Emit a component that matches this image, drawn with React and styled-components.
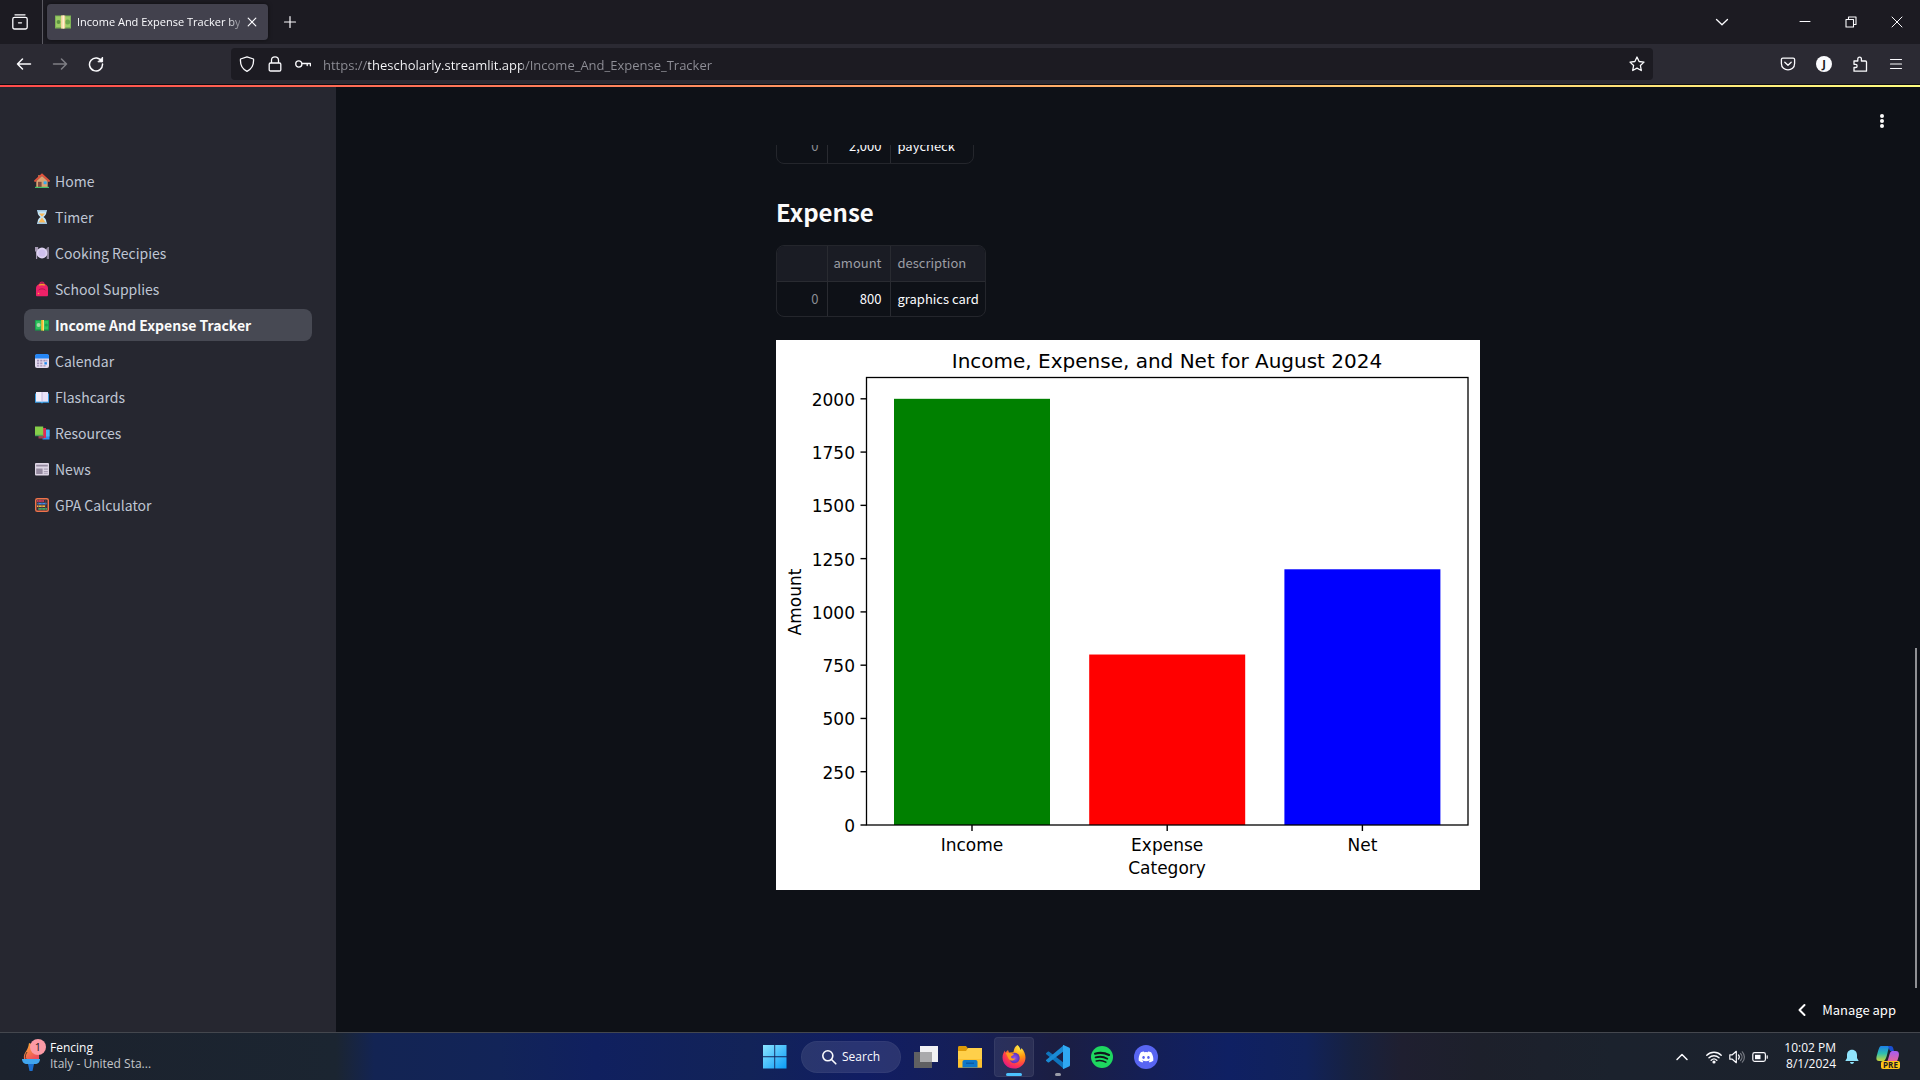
import React from "react";
import styled, { createGlobalStyle, css } from "styled-components";
import { FaDiscord } from "react-icons/fa";

const GlobalStyle = createGlobalStyle`
  *, *::before, *::after { box-sizing: border-box; }
  body { margin: 0; background: #0e1117; }
  button { border: 0; padding: 0; background: none; color: inherit; font: inherit; }
  svg { display: block; flex: none; }
`;

const system = `"Open Sans", "Noto Sans", sans-serif`;
const source = `"Noto Sans CJK SC", "Noto Sans", sans-serif`;

/* ---------- Window ---------- */

const Window = styled.div`
  display: flex;
  flex-direction: column;
  height: 100vh;
  overflow: hidden;
  color: #fbfbfe;
  font-family: ${system};
  font-size: 12px;
`;

const TabStrip = styled.header`
  display: flex;
  align-items: center;
  height: 44px;
  flex: none;
  background: #1c1b22;
`;

const IconButton = styled.button`
  display: flex;
  align-items: center;
  justify-content: center;
  width: ${(p) => p.$width || 36}px;
  height: 100%;
  flex: none;
  opacity: ${(p) => (p.disabled ? 0.4 : 1)};
  color: #fbfbfe;
`;

const ViewCell = styled.div`
  width: 43px;
  height: 100%;
  padding-right: 2px;
  border-right: 1px solid #5b5a62;
`;

const Tab = styled.div`
  display: flex;
  align-items: center;
  width: 221px;
  height: 36px;
  margin: 0 2px 0 4px;
  padding: 0 4px 0 8px;
  border-radius: 4px;
  background: #42414d;
  box-shadow: 0 0 4px rgba(0, 0, 0, 0.5);
`;

const TabTitle = styled.button`
  flex: 1;
  min-width: 0;
  margin-left: 6px;
  overflow: hidden;
  white-space: nowrap;
  text-align: left;
  font-size: 11px;
  line-height: 20px;
  mask-image: linear-gradient(90deg, #000 150px, transparent 170px);
`;

const WindowControls = styled.div`
  display: flex;
  height: 100%;
  padding-left: 40px;
`;

const Spacer = styled.div`
  flex: 1;
`;

const Toolbar = styled.div`
  display: flex;
  align-items: center;
  height: 41px;
  flex: none;
  border-bottom: 1px solid #0c0c10;
  background: #2b2a33;
`;

const NavButtons = styled.div`
  display: flex;
  width: 231px;
  height: 40px;
  padding-left: 6px;
  flex: none;
`;

const AddressBar = styled.label`
  display: flex;
  flex: 1;
  align-items: center;
  gap: 12px;
  height: 32px;
  padding: 0 8px;
  border-radius: 4px;
  background: #1c1b22;
`;

const AddressInput = styled.input`
  flex: 1;
  min-width: 0;
  padding: 2px 0 0;
  border: 0;
  outline: 0;
  background: linear-gradient(90deg, #8f8f97 45px, #fbfbfe 45px 199px, #8f8f97 199px);
  background-clip: text;
  -webkit-background-clip: text;
  color: transparent;
  font-family: ${system};
  font-size: 13px;
  line-height: 20px;
`;

const ToolbarEnd = styled.div`
  display: flex;
  justify-content: flex-end;
  width: 267px;
  height: 40px;
  padding-right: 6px;
  flex: none;
`;

const Avatar = styled.span`
  display: grid;
  place-items: center;
  width: 16px;
  height: 16px;
  border-radius: 50%;
  background: #fbfbfe;
  color: #1c1b22;
  font-size: 11px;
  font-weight: 700;
  line-height: 16px;
`;

/* ---------- App ---------- */

const Page = styled.div`
  display: grid;
  grid-template-columns: 336px minmax(0, 1fr);
  grid-template-rows: 2px minmax(0, 1fr);
  flex: 1;
  min-height: 0;
  background: #0e1117;
  font-family: ${source};
`;

const Decoration = styled.div`
  grid-column: 1 / -1;
  background: linear-gradient(90deg, #ff4b4b, #fffd80);
`;

const Sidebar = styled.nav`
  padding: 78px 24px 0;
  background: #262730;
`;

const NavList = styled.ul`
  display: flex;
  flex-direction: column;
  gap: 4px;
  margin: 0;
  padding: 0;
  list-style: none;
`;

const NavLink = styled.a`
  display: flex;
  align-items: center;
  gap: 5px;
  height: 32px;
  padding: 0 8px 0 10px;
  border-radius: 8px;
  color: #bfc5d3;
  font-size: 14px;
  line-height: 32px;
  text-decoration: none;
  white-space: nowrap;
  ${(p) =>
    p.$active &&
    css`
      background: #474953;
      color: #fafafa;
      font-weight: 700;
    `}
`;

const Main = styled.main`
  display: flex;
  flex-direction: column;
  min-width: 0;
  min-height: 0;
`;

const AppHeader = styled.div`
  display: flex;
  justify-content: flex-end;
  align-items: center;
  height: 58px;
  padding: 10px 20px 0 0;
  flex: none;
`;

const Scroller = styled.div`
  position: relative;
  flex: 1;
  min-height: 0;
  overflow: hidden;
`;

const Block = styled.div`
  display: flex;
  flex-direction: column;
  align-items: flex-start;
  width: 100%;
  max-width: 704px;
  margin: -53px auto 0;
`;

const Heading = styled.h3`
  margin: 0;
  padding: 28px 0 13px;
  color: #fafafa;
  font-size: 24px;
  font-weight: 700;
  line-height: 40px;
`;

const TableFrame = styled.div`
  overflow: hidden;
  border: 1px solid #24262c;
  border-radius: 8px;
`;

const DataTable = styled.table`
  border-collapse: collapse;
  font-size: 13px;
  line-height: 20px;

  th,
  td {
    height: 35px;
    padding: 0 8px 0 6px;
    border: 0 solid #292b31;
    border-left-width: 1px;
    font-weight: 400;
    text-align: left;
    white-space: nowrap;
  }
  th:first-child,
  td:first-child {
    width: 50px;
    border-left-width: 0;
    color: #8a8d94;
    text-align: right;
  }
  th:nth-child(2),
  td:nth-child(2) {
    width: 63px;
    text-align: right;
  }
  th:nth-child(3),
  td:nth-child(3) {
    width: ${(p) => p.$last}px;
    padding: 0 4px 0 7px;
  }
  thead th {
    background: #1a1c24;
    border-bottom-width: 1px;
    color: #9c9ea5;
  }
`;

const ChartSvg = styled.svg`
  width: 100%;
  height: auto;
  margin-top: 23px;
  background: #fff;
  font-family: "DejaVu Sans", sans-serif;
  font-size: 17px;
`;

const ScrollThumb = styled.div`
  position: absolute;
  right: 3px;
  bottom: 0;
  width: 2px;
  height: 340px;
  background: #8f9094;
`;

const ManageBar = styled.div`
  display: flex;
  justify-content: flex-end;
  height: 44px;
  padding-right: 24px;
  flex: none;
`;

const ManageButton = styled.button`
  display: flex;
  align-items: center;
  gap: 12px;
  color: #fff;
  font-size: 13px;
  line-height: 20px;
`;

/* ---------- Taskbar ---------- */

const Taskbar = styled.footer`
  display: grid;
  grid-template-columns: 1fr auto 1fr;
  height: 48px;
  flex: none;
  border-top: 1px solid #44474e;
  background: linear-gradient(
    90deg,
    #1c222d 0%,
    #1b2531 17.5%,
    #132453 19.5%,
    #122458 26%,
    #10205f 31%,
    #122358 39%,
    #111d63 45%,
    #151f58 50%,
    #1b1e42 55%,
    #141f57 60%,
    #0f2063 64%,
    #11225a 68%,
    #17213f 70.5%,
    #1f1f30 73%,
    #1d202b 77%,
    #1b222d 84%,
    #1c222c 100%
  );
`;

const Widget = styled.button`
  display: flex;
  align-items: center;
  justify-self: start;
  gap: 4px;
  padding: 0 0 2px 20px;
  text-align: left;
  font-size: 12px;
  line-height: 16px;
`;

const WidgetDetail = styled.span`
  display: block;
  color: #c3c6ca;
`;

const Dock = styled.div`
  display: flex;
  align-items: center;
`;

const DockItem = styled.button`
  display: flex;
  flex-direction: column;
  align-items: center;
  justify-content: center;
  position: relative;
  width: 40px;
  height: 40px;
  margin: 0 2px;
  border-radius: 4px;
  ${(p) =>
    p.$active &&
    css`
      background: rgba(255, 255, 255, 0.08);
      box-shadow: inset 0 0 0 1px rgba(255, 255, 255, 0.06);
    `}

  &::after {
    content: "";
    position: absolute;
    bottom: 1px;
    width: ${(p) => (p.$active ? 16 : 6)}px;
    height: 3px;
    border-radius: 2px;
    background: ${(p) => (p.$active ? "#4cc2ff" : "#9a9ca8")};
    display: ${(p) => (p.$active || p.$open ? "block" : "none")};
  }
`;

const SearchPill = styled.button`
  display: flex;
  align-items: center;
  justify-content: center;
  gap: 5px;
  width: 100px;
  height: 32px;
  margin: 0 3px 0 4px;
  border-radius: 16px;
  background: rgba(255, 255, 255, 0.1);
  box-shadow: inset 0 0 0 1px rgba(255, 255, 255, 0.04);
`;

const Tray = styled.div`
  display: flex;
  align-items: center;
  justify-content: flex-end;
  gap: 8px;
  padding-right: 12px;
`;

const TrayGroup = styled.button`
  display: flex;
  align-items: center;
  gap: 7px;
  margin: 0 8px 0 8px;
`;

const Clock = styled.time`
  padding-bottom: 2px;
  font-size: 12px;
  line-height: 16px;
  text-align: right;
`;

/* ---------- Drawings ---------- */

const Line = ({ size = 16, w = 1.3, children }) => (
  <svg width={size} height={size} viewBox="0 0 16 16" fill="none" stroke="currentColor" strokeWidth={w} strokeLinecap="round" strokeLinejoin="round" aria-hidden="true">
    {children}
  </svg>
);

const Emoji = ({ children, width = 16 }) => (
  <svg width={width} height="16" viewBox="0 0 16 16" aria-hidden="true">
    {children}
  </svg>
);

const House = () => (
  <Emoji>
    <path d="M4 2h2v3H4z" fill="#a56a4a" />
    <path d="M2.3 8 8 2.8 13.7 8v6H2.3z" fill="#d9a273" />
    <path d="M1 8 8 1.5 15 8" fill="none" stroke="#e0533c" strokeWidth="1.8" strokeLinecap="round" />
    <path d="M4 8.8h3.6V14H4z" fill="#7d4b3f" />
    <path d="M9.6 8.4h3v2.8h-3z" fill="#35a9f0" />
    <path d="M1 13.8h14V15H1z" fill="#43c06a" />
  </Emoji>
);
const Hourglass = () => (
  <Emoji>
    <path d="M3.5 2h9c0 3.400-1.200 4.700-3 6 1.800 1.300 3 2.800 3 6h-9c0-3.200 1.200-4.700 3-6-1.800-1.300-3-2.600-3-6z" fill="#c4e6f8" />
    <path d="M5 4.500h6L8 7.800zM8 8.500l3.800 5.300H4.200z" fill="#f9b757" />
    <path d="M3 1h10v1.600H3zM3 13.400h10V15H3z" fill="#9fc3dd" />
  </Emoji>
);
const Plate = () => (
  <Emoji>
    <path d="M1 2v4l1 1v7h1.200V7l1-1V2M13.800 14V2c-1.600 1-2 4-1.600 6h.6v6zM14.200 2H15v12h-.8z" fill="#a79bb5" />
    <circle cx="8" cy="8" r="5.400" fill="#ded3f2" />
    <circle cx="8" cy="8" r="3.600" fill="#cfc0ee" />
  </Emoji>
);
const Backpack = () => (
  <Emoji>
    <path d="M6 3c0-2.600 4-2.600 4 0" fill="none" stroke="#c9185b" strokeWidth="1.200" />
    <path d="M2 14V7.500C2 .8 14 .8 14 7.500V14c0 1-.5 1.300-1.300 1.300H3.300C2.500 15.300 2 15 2 14z" fill="#ee2168" />
    <path d="M5.500 4.600c0-1.600 5-1.600 5 0" fill="none" stroke="#f5a12c" strokeWidth="1.500" />
    <path d="M4.400 9.400c1-2 6.200-2 7.200 0" fill="none" stroke="#b4134f" strokeWidth="1" />
    <circle cx="4.500" cy="12.500" r=".8" fill="#f9a63a" />
  </Emoji>
);
const Money = () => (
  <Emoji>
    <path d="M1 3h14v10.600H1z" fill="#169a4a" />
    <path d="M1.800 3.800h12.400v8.600H1.800z" fill="#2fc15e" />
    <circle cx="4.600" cy="8" r="2" fill="#a9d9a8" />
    <circle cx="12.300" cy="8" r="1.600" fill="#1da050" />
    <path d="M7.200 3h2.800v10.600H7.200z" fill="#f8b832" />
    <path d="M9 3h1v10.600H9z" fill="#fbe07a" />
  </Emoji>
);
const Calendar = () => (
  <Emoji>
    <rect x="1" y="1.500" width="14" height="13.500" rx="2" fill="#e3dbee" />
    <path d="M1 5.400V3c0-1.200.8-2 2-2h10c1.200 0 2 .8 2 2v2.400z" fill="#2586f5" />
    <path d="M3 6.800h2.200V8.500H3zM6.200 6.800h2.200V8.500H6.200zM9.400 6.800h2.200V8.500H9.400zM3 9.500h2.200v1.700H3zM6.200 9.500h2.200v1.700H6.200zM3 12.200h2.200v1.300H3zM6.200 12.200h2.200v1.300H6.200zM9.400 12.200h2.200v1.300H9.400zM12.300 6.800h1v1.700h-1z" fill="#a292b8" />
    <path d="M10.400 9.200h2.500v2.300h-2.500z" fill="#1c86ee" />
  </Emoji>
);
const OpenBook = () => (
  <Emoji>
    <path d="M1 4.400h14v9.400H9.200L8 14.600l-1.200-.8H1z" fill="#3aa0e8" />
    <path d="M2 3h6v9.600H2z" fill="#f3eefa" />
    <path d="M8 3h6v9.600H8z" fill="#e9e1f6" />
    <path d="M7.500 3h1v9.600h-1z" fill="#c6b9db" />
  </Emoji>
);
const Books = () => (
  <Emoji>
    <path d="M8.500 5h7v9.500h-7z" fill="#2f8df0" />
    <path d="M12 4.500h3.500v7H12z" fill="#4bb6f5" />
    <path d="M5.500 3H12v10H5.500z" fill="#dc2b58" />
    <path d="M4.500 11H10v2.500H4.500z" fill="#a04054" />
    <path d="M1 1.500h8.200v9.300H1z" fill="#86cf49" />
    <path d="M1 9.800h8.200v1.400H1z" fill="#4f9e5b" />
  </Emoji>
);
const Newspaper = () => (
  <Emoji>
    <rect x="1" y="2" width="14" height="12.500" rx="1" fill="#ddd5e4" />
    <path d="M2.200 3.800h11.600v1.800H2.200zM2.200 7.400h6.400v5.600H2.200z" fill="#94899f" />
    <path d="M9.800 7.600h4v1.200h-4zM9.800 10h4v1.200h-4zM9.800 12.200h4v.8h-4z" fill="#aaa0b5" />
  </Emoji>
);
const Abacus = () => (
  <Emoji>
    <rect x="1.700" y="1.700" width="12.600" height="12.600" rx="1.600" fill="#3b2f38" stroke="#f0734a" strokeWidth="1.400" />
    <path d="M3 4h7" stroke="#e8385c" strokeWidth="1.600" />
    <path d="M3.500 6.600h9" stroke="#3b8df2" strokeWidth="1.600" />
    <path d="M3 9.200h8" stroke="#f4b23c" strokeWidth="1.600" />
    <path d="M4 11.900h9" stroke="#3fb865" strokeWidth="1.600" />
    <path d="M4.500 2.400v11.200M8 2.400v11.200M11.500 2.400v11.200" stroke="#5c4a52" strokeWidth=".6" />
  </Emoji>
);
const TabMoney = () => (
  <Emoji>
    <path d="M0 1.500h16v13H0z" fill="#7db357" />
    <path d="M1 2.500h14v10.500H1z" fill="#9ccc65" />
    <circle cx="3.500" cy="8" r="1.900" fill="#5d9440" />
    <circle cx="12.600" cy="8" r="2.500" fill="#6da64b" />
    <path d="M6 1.500h4.200v13H6z" fill="#f3d59b" />
    <path d="M7.500 1.500H9v13H7.500z" fill="#fff1cf" />
  </Emoji>
);

const Torch = () => (
  <svg width="26" height="34" viewBox="0 0 26 34" aria-hidden="true">
    <defs>
      <linearGradient id="flame" x1="0" y1="0" x2=".6" y2="1">
        <stop offset="0" stopColor="#ffb62e" />
        <stop offset="1" stopColor="#ee4f5c" />
      </linearGradient>
    </defs>
    <path d="M4 20C3 13 8 13 9 4c8 3 11 8 10 16z" fill="url(#flame)" />
    <path d="M7 13c-2 3-2 5-1 7" stroke="#5b3a24" fill="none" />
    <path d="M2 20h18c0 3-2 5-5 5H7c-3 0-5-2-5-5z" fill="#41a5ee" />
    <path d="M8 25h6l-1.500 7h-3z" fill="#1b6fd0" />
    <circle cx="18" cy="8" r="8" fill="#fc9aa5" />
    <text x="18" y="12" fontSize="11" textAnchor="middle" fill="#1c1b22">1</text>
  </svg>
);

const WindowsLogo = () => (
  <svg width="24" height="24" viewBox="0 0 24 24" aria-hidden="true">
    <defs>
      <linearGradient id="win" x1="0" y1="0" x2="1" y2="1">
        <stop offset="0" stopColor="#8be4ff" />
        <stop offset="1" stopColor="#0a9cf7" />
      </linearGradient>
    </defs>
    <path d="M0 0h11.300v11.300H0zM12.200 0h11.300v11.300H12.200zM0 12.200h11.300v11.300H0zM12.200 12.200h11.300v11.300H12.200z" fill="url(#win)" />
  </svg>
);
const TaskView = () => (
  <svg width="24" height="24" viewBox="0 0 24 24" aria-hidden="true">
    <path d="M6 1h18v16H6z" fill="#f1f1f3" />
    <path d="M0 7h18v16H0z" fill="#606062" />
    <path d="M6 7h12v10H6z" fill="#aaaaac" />
  </svg>
);
const Folder = () => (
  <svg width="24" height="24" viewBox="0 0 24 24" aria-hidden="true">
    <path d="M0 2.500C0 1.500.5 1 1.500 1H8l2 2.500V8H0z" fill="#dd9a08" />
    <path d="M0 6h8l2-3h14v19.500H0z" fill="#ffd04a" />
    <path d="M0 14h24v8.500H0z" fill="#fdc22f" />
    <path d="M4.500 22.500V17c0-1.300.7-2 2-2h11c1.300 0 2 .7 2 2v5.500z" fill="#0f78c9" />
    <path d="M8 17.500h8v1.500H8z" fill="#0b5ba5" />
  </svg>
);
const Firefox = () => (
  <svg width="24" height="24" viewBox="0 0 24 24" aria-hidden="true">
    <defs>
      <radialGradient id="fx" cx=".75" cy=".1" r="1">
        <stop offset="0" stopColor="#fff04a" />
        <stop offset=".4" stopColor="#ff980e" />
        <stop offset=".75" stopColor="#ff3a4e" />
        <stop offset="1" stopColor="#e01686" />
      </radialGradient>
      <radialGradient id="globe">
        <stop offset="0" stopColor="#8f55f5" />
        <stop offset="1" stopColor="#5b32b8" />
      </radialGradient>
    </defs>
    <path d="M15.500 0c2 1.500 2.600 3.300 3 5 .7-.7.900-1.300.9-2C22 5.500 23.500 9 23.500 12.500 23.500 19 18.500 23.500 12 23.500S.5 18.700.5 12.500C.5 9.500 1.800 7 3 5.500c0 1 .1 1.500.4 2L6 5l1 2.500 4.500-.2C12 4.500 12.500 1.500 15.500 0z" fill="url(#fx)" />
    <circle cx="12.500" cy="13" r="5.200" fill="url(#globe)" />
    <path d="M3.800 8c3-1 5 .3 8.200.8-.2 1.700-2.500 2-3 3 0 1.800 2.500 2.200 4.500 1.400-1.300 2.800-5 3.200-6.800.8z" fill="#ff9a1f" />
  </svg>
);
const VSCode = () => (
  <svg width="24" height="24" viewBox="0 0 24 24" aria-hidden="true">
    <path d="M0 8.300 1.700 6.700c.5-.4 1-.4 1.500 0L18 18v6L.3 9.300c-.4-.3-.5-.7-.3-1z" fill="#0f74bd" />
    <path d="M0 15.700l1.700 1.600c.5.400 1 .4 1.500 0L18 6V0L.3 14.700c-.4.300-.5.700-.3 1z" fill="#1a8ad4" />
    <path d="M17.500 24c-.5 0-.7-.3-.5-1V1c-.2-.7 0-1 .5-1L23 2.500c.7.300 1 .8 1 1.500v16c0 .7-.3 1.200-1 1.500z" fill="#2fa8f2" />
  </svg>
);
const Spotify = () => (
  <svg width="24" height="24" viewBox="0 0 24 24" aria-hidden="true">
    <circle cx="12" cy="12" r="11" fill="#1ed760" />
    <g fill="none" stroke="#10151c" strokeLinecap="round">
      <path d="M5 8.700c4.500-1.300 9.800-.9 14 1.300" strokeWidth="2.100" />
      <path d="M5.600 12.400c4-1.100 8.200-.7 11.700 1.300" strokeWidth="1.800" />
      <path d="M6.200 15.900c3.400-.8 6.700-.5 9.700 1.200" strokeWidth="1.500" />
    </g>
  </svg>
);
const DiscordDisc = styled.span`
  display: grid;
  place-items: center;
  width: 24px;
  height: 24px;
  border-radius: 50%;
  background: #5865f2;
  color: #fff;
`;
const Copilot = () => (
  <svg width="24" height="24" viewBox="0 0 24 24" aria-hidden="true">
    <defs>
      <linearGradient id="cpl" x1="0" y1="0" x2="0" y2="1">
        <stop offset="0" stopColor="#1b7fe8" />
        <stop offset=".5" stopColor="#2fbfae" />
        <stop offset="1" stopColor="#c8d63a" />
      </linearGradient>
      <linearGradient id="cpr" x1="0" y1="0" x2="0" y2="1">
        <stop offset="0" stopColor="#a45cf5" />
        <stop offset="1" stopColor="#f2688a" />
      </linearGradient>
    </defs>
    <path d="M5 1h9c-2.500 2-2.500 13-6 15H3c-3 0-3-3-2-6S3 1 5 1z" fill="url(#cpl)" />
    <path d="M12 1h3c2 0 2.500 3 3 5h-4z" fill="#1a4fd0" />
    <path d="M16 6h4c3 0 3.500 3 2.500 6s-1.500 6-4 6H10c3-2 3-12 6-12z" fill="url(#cpr)" />
    <rect x="5" y="16" width="19" height="8" rx="2" fill="#fcc419" />
    <text x="14.500" y="23" fontSize="8" fontWeight="700" textAnchor="middle" fill="#1c1b22">PRE</text>
  </svg>
);

/* ---------- Chart ---------- */

const bars = [
  { label: "Income", value: 2000, color: "#008000" },
  { label: "Expense", value: 800, color: "#ff0000" },
  { label: "Net", value: 1200, color: "#0000ff" },
];
const ticks = [0, 250, 500, 750, 1000, 1250, 1500, 1750, 2000];
const plot = { left: 90.5, right: 692, top: 37.5, bottom: 485 };
const yOf = (v) => plot.bottom - (v / 2100) * (plot.bottom - plot.top);

const BarChart = () => (
  <ChartSvg viewBox="0 0 704 550" role="img" aria-label="Income, expense and net">
    <text x="391" y="28" fontSize="20" textAnchor="middle">Income, Expense, and Net for August 2024</text>
    {bars.map((b, i) => {
      const x = 118 + i * 195.2;
      return (
        <g key={b.label}>
          <rect x={x} y={yOf(b.value)} width="156" height={plot.bottom - yOf(b.value)} fill={b.color} />
          <path d={`M${x + 78} ${plot.bottom}v6`} stroke="#000" strokeWidth="1.400" />
          <text x={x + 78} y="511" textAnchor="middle">{b.label}</text>
        </g>
      );
    })}
    <rect x={plot.left} y={plot.top} width={plot.right - plot.left} height={plot.bottom - plot.top} fill="none" stroke="#000" strokeWidth="1.300" />
    {ticks.map((t) => (
      <g key={t}>
        <path d={`M${plot.left} ${yOf(t)}h-6`} stroke="#000" strokeWidth="1.400" />
        <text x="79" y={yOf(t) + 7} textAnchor="end">{t}</text>
      </g>
    ))}
    <text x="391" y="534" textAnchor="middle">Category</text>
    <text textAnchor="middle" transform="translate(25 262) rotate(-90)">Amount</text>
  </ChartSvg>
);

const Records = ({ name, amount, description, last }) => (
  <TableFrame>
    <DataTable aria-label={name} $last={last}>
      <thead>
        <tr>
          <th scope="col" aria-label="index" />
          <th scope="col">amount</th>
          <th scope="col">description</th>
        </tr>
      </thead>
      <tbody>
        <tr>
          <td>0</td>
          <td>{amount}</td>
          <td>{description}</td>
        </tr>
      </tbody>
    </DataTable>
  </TableFrame>
);

const pages = [
  ["Home", House],
  ["Timer", Hourglass],
  ["Cooking Recipies", Plate],
  ["School Supplies", Backpack],
  ["Income And Expense Tracker", Money],
  ["Calendar", Calendar],
  ["Flashcards", OpenBook],
  ["Resources", Books],
  ["News", Newspaper],
  ["GPA Calculator", Abacus],
];

export default function App() {
  return (
    <Window>
      <GlobalStyle />
      <TabStrip>
        <ViewCell>
          <IconButton $width={40} aria-label="Firefox View">
            <Line>
              <path d="M3 .8h10M2.500 3.400h11c1 0 1.700.7 1.700 1.700v8.200c0 1-.7 1.700-1.700 1.700h-11c-1 0-1.700-.7-1.700-1.700V5.100c0-1 .7-1.700 1.700-1.700zM6.500 8.800h3" />
            </Line>
          </IconButton>
        </ViewCell>
        <Tab>
          <TabMoney />
          <TabTitle>Income And Expense Tracker by</TabTitle>
          <IconButton $width={24} aria-label="Close tab">
            <Line w={1.2}><path d="M4.200 4.200l7.600 7.600M11.800 4.200l-7.600 7.600" /></Line>
          </IconButton>
        </Tab>
        <IconButton $width={40} aria-label="New tab">
          <Line w={1.2}><path d="M8 2.500v11M2.500 8h11" /></Line>
        </IconButton>
        <Spacer />
        <IconButton $width={40} aria-label="List all tabs">
          <Line><path d="M2.500 5.500 8 10.800l5.500-5.300" /></Line>
        </IconButton>
        <WindowControls>
          <IconButton $width={46} aria-label="Minimize">
            <Line w={1}><path d="M3 7.500h10" /></Line>
          </IconButton>
          <IconButton $width={46} aria-label="Restore">
            <Line w={1.1}><path d="M3 5.500h7.500V13H3zM5.500 5.500V3H13v7.500h-2.500" /></Line>
          </IconButton>
          <IconButton $width={46} aria-label="Close">
            <Line w={1}><path d="M3 3l10 10M13 3 3 13" /></Line>
          </IconButton>
        </WindowControls>
      </TabStrip>

      <Toolbar>
        <NavButtons>
          <IconButton aria-label="Back">
            <Line w={1.5}><path d="M14.500 8H1.500M6.500 3 1.500 8l5 5" /></Line>
          </IconButton>
          <IconButton aria-label="Forward" disabled>
            <Line w={1.5}><path d="M1.500 8h13M9.500 3l5 5-5 5" /></Line>
          </IconButton>
          <IconButton aria-label="Reload">
            <Line w={1.5}>
              <path d="M13.800 5.500A6.500 6.500 0 1 0 14.500 8" />
              <path d="M14.600 1.500v4.300h-4.300z" fill="currentColor" strokeWidth="1" />
            </Line>
          </IconButton>
        </NavButtons>
        <AddressBar>
          <Line><path d="M8 .8 14.500 3c.4 5-1.500 10-6.500 12.300C3 13 1.100 8 1.500 3z" /></Line>
          <Line><path d="M3.500 7h9c.8 0 1.300.5 1.300 1.300v5.400c0 .8-.5 1.300-1.300 1.300h-9c-.8 0-1.300-.5-1.300-1.300V8.300C2.200 7.500 2.700 7 3.500 7zM4.500 7V4c0-4.300 7-4.300 7 0v3" /></Line>
          <Line>
            <circle cx="3.800" cy="8" r="3.100" />
            <path d="M7 7.500h8.400v2.300M12.200 7.500v2" />
          </Line>
          <AddressInput aria-label="Address" defaultValue="https://thescholarly.streamlit.app/Income_And_Expense_Tracker" />
          <Line><path d="M8 1l2.100 4.500 4.900.6-3.600 3.400.9 5L8 12.100l-4.300 2.400.9-5L1 6.100l4.900-.6z" /></Line>
        </AddressBar>
        <ToolbarEnd>
          <IconButton aria-label="Pocket">
            <Line>
              <path d="M2.800 2.200h10.400c.8 0 1.400.6 1.400 1.400V7.500c0 8.600-13.200 8.600-13.200 0V3.600c0-.8.600-1.400 1.400-1.400z" />
              <path d="M4.800 6.300 8 9.300l3.200-3" />
            </Line>
          </IconButton>
          <IconButton aria-label="Account"><Avatar>J</Avatar></IconButton>
          <IconButton aria-label="Extensions">
            <Line><path d="M2 15.200V11.500h1.600c2 0 2-3.200 0-3.200H2V5h3.800V3c0-2.600 3.600-2.600 3.600 0v2h4c.7 0 1.100.4 1.100 1.100v9.100z" /></Line>
          </IconButton>
          <IconButton aria-label="Menu">
            <Line w={1.2}><path d="M2.500 3.500h11M2.500 8h11M2.500 12.500h11" /></Line>
          </IconButton>
        </ToolbarEnd>
      </Toolbar>

      <Page>
        <Decoration />
        <Sidebar>
          <NavList>
            {pages.map(([label, Icon]) => (
              <li key={label}>
                <NavLink href="#" $active={label === "Income And Expense Tracker"}>
                  <Icon />
                  {label}
                </NavLink>
              </li>
            ))}
          </NavList>
        </Sidebar>
        <Main>
          <AppHeader>
            <IconButton aria-label="Main menu">
              <svg width="16" height="16" viewBox="0 0 16 16" fill="#fafafa" aria-hidden="true">
                <circle cx="8" cy="3" r="2" />
                <circle cx="8" cy="8" r="2" />
                <circle cx="8" cy="13" r="2" />
              </svg>
            </IconButton>
          </AppHeader>
          <Scroller>
            <Block>
              <Records name="Income" amount="2,000" description="paycheck" last={83} />
              <Heading>Expense</Heading>
              <Records name="Expense" amount="800" description="graphics card" last={95} />
              <BarChart />
            </Block>
            <ScrollThumb />
          </Scroller>
          <ManageBar>
            <ManageButton>
              <Line w={2}><path d="M10.500 3 5.500 8l5 5" /></Line>
              Manage app
            </ManageButton>
          </ManageBar>
        </Main>
      </Page>

      <Taskbar>
        <Widget>
          <Torch />
          <span>
            Fencing
            <WidgetDetail>Italy - United Sta...</WidgetDetail>
          </span>
        </Widget>
        <Dock>
          <DockItem aria-label="Start"><WindowsLogo /></DockItem>
          <SearchPill>
            <Line w={1.6}>
              <circle cx="6.800" cy="6.800" r="5" />
              <path d="M10.500 10.500l4.300 4.300" />
            </Line>
            Search
          </SearchPill>
          <DockItem aria-label="Task view"><TaskView /></DockItem>
          <DockItem aria-label="File Explorer"><Folder /></DockItem>
          <DockItem aria-label="Firefox" $active><Firefox /></DockItem>
          <DockItem aria-label="Visual Studio Code" $open><VSCode /></DockItem>
          <DockItem aria-label="Spotify"><Spotify /></DockItem>
          <DockItem aria-label="Discord">
            <DiscordDisc><FaDiscord size={16} /></DiscordDisc>
          </DockItem>
        </Dock>
        <Tray>
          <IconButton $width={16} aria-label="Hidden icons">
            <Line w={1.5}><path d="M3 10.500 8 5.500l5 5" /></Line>
          </IconButton>
          <TrayGroup aria-label="Network, volume and battery">
            <Line w={1.4}>
              <path d="M.8 6.300c4-4 10.400-4 14.400 0M3 8.800c2.800-2.700 7.200-2.700 10 0M5.200 11.200c1.600-1.500 4-1.500 5.600 0" />
              <circle cx="8" cy="13" r=".9" fill="currentColor" />
            </Line>
            <Line w={1.2}>
              <path d="M.8 5.800h2.500l4-3.500v11.400l-4-3.500H.8zM9.500 6c1 1.200 1 2.800 0 4" />
              <path d="M11.500 4.500c2 2 2 5 0 7M13.300 2.800c2.800 3 2.800 7.400 0 10.400" opacity=".4" />
            </Line>
            <Line w={1.2}>
              <rect x=".8" y="3.600" width="12.600" height="8.800" rx="1.800" />
              <path d="M3 5.800h5.500v4.400H3z" fill="currentColor" stroke="none" />
              <path d="M15.200 6.800v2.400" />
            </Line>
          </TrayGroup>
          <Clock>
            10:02 PM
            <br />
            8/1/2024
          </Clock>
          <IconButton $width={16} aria-label="Notifications">
            <svg width="16" height="16" viewBox="0 0 16 16" fill="#8fe3fb" aria-hidden="true">
              <path d="M8 .8c3.200 0 5 2.300 5 5.200V9l1.700 3H1.300L3 9V6C3 3.100 4.800.8 8 .8zM6 13h4c-.3 2.600-3.700 2.600-4 0z" />
            </svg>
          </IconButton>
          <IconButton $width={40} aria-label="Copilot"><Copilot /></IconButton>
        </Tray>
      </Taskbar>
    </Window>
  );
}
